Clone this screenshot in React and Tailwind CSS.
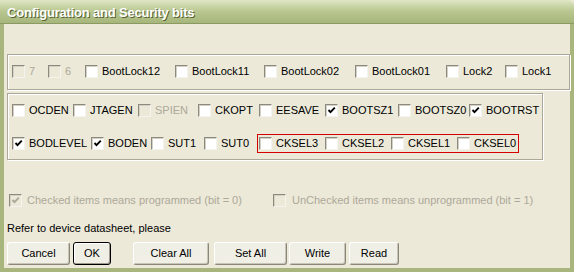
import React from 'react';

const row1 = [
  { label: '7', w: 'w-[36px]', disabled: true },
  { label: '6', w: 'w-[37px]', disabled: true },
  { label: 'BootLock12', w: 'w-[90px]' },
  { label: 'BootLock11', w: 'w-[89px]' },
  { label: 'BootLock02', w: 'w-[91px]' },
  { label: 'BootLock01', w: 'w-[91px]' },
  { label: 'Lock2', w: 'w-[59px]' },
  { label: 'Lock1', w: 'w-[50px]' },
];

const row2 = [
  { label: 'OCDEN', w: 'w-[61px]' },
  { label: 'JTAGEN', w: 'w-[65px]' },
  { label: 'SPIEN', w: 'w-[60px]', disabled: true },
  { label: 'CKOPT', w: 'w-[61px]' },
  { label: 'EESAVE', w: 'w-[66px]' },
  { label: 'BOOTSZ1', w: 'w-[73px]', checked: true },
  { label: 'BOOTSZ0', w: 'w-[71px]' },
  { label: 'BOOTRST', w: 'w-[60px]', checked: true },
];

const row3 = [
  { label: 'BODLEVEL', w: 'w-[79px]', checked: true },
  { label: 'BODEN', w: 'w-[60px]', checked: true },
  { label: 'SUT1', w: 'w-[53px]' },
  { label: 'SUT0', w: 'w-[53px]' },
];

const cksel = [
  { label: 'CKSEL3', w: 'w-[66px]' },
  { label: 'CKSEL2', w: 'w-[66px]' },
  { label: 'CKSEL1', w: 'w-[66px]' },
  { label: 'CKSEL0', w: 'w-[59px]' },
];

const buttons = [
  { label: 'Cancel', cls: 'ml-[3px] w-[63px]' },
  { label: 'OK', cls: 'ml-[3px] w-[38px]', def: true },
  { label: 'Clear All', cls: 'ml-[22px] w-[76px]' },
  { label: 'Set All', cls: 'ml-[5px] w-[73px]' },
  { label: 'Write', cls: 'ml-[2px] w-[57px]' },
  { label: 'Read', cls: 'ml-[3px] w-[50px]' },
];

function Box({ checked, disabled }) {
  return (
    <span
      className={`relative flex items-center justify-center w-[13px] h-[13px] shrink-0 border border-t-[#8c8a7e] border-l-[#8c8a7e] border-b-[#f4f3ee] border-r-[#f4f3ee] shadow-[inset_1px_1px_0_#d4d0c4] ${disabled ? 'bg-[#ece9d8]' : 'bg-white'}`}
    >
      {checked && (
        <svg width="9" height="9" viewBox="0 0 9 9">
          <path
            d="M1.5 4 L3.5 6.2 L7.8 1.6"
            fill="none"
            stroke={disabled ? '#aca899' : '#000'}
            strokeWidth="1.9"
          />
        </svg>
      )}
    </span>
  );
}

function Check({ label, w, checked, disabled }) {
  return (
    <div className={`flex items-center gap-[4px] shrink-0 ${w}`}>
      <Box checked={checked} disabled={disabled} />
      <span className={`whitespace-nowrap leading-[13px] ${disabled ? 'text-[#aca899]' : 'text-black'}`}>{label}</span>
    </div>
  );
}

export default function App() {
  return (
    <div className="w-[574px] h-[272px] flex flex-col overflow-hidden font-['Liberation_Sans',Arial,sans-serif] text-[11px] bg-[#ece9d8]">
      {/* Title bar */}
      <div className="h-[24px] shrink-0 flex items-center pl-[7px] pt-[2px] rounded-tr-[6px] border-b border-[#8b9a62] bg-gradient-to-b from-[#dfe6c4] via-[#b8c68f] to-[#a7b67c]">
        <span className="text-white font-bold text-[13px] tracking-[-0.2px] [text-shadow:1px_1px_0_#56632f]">
          Configuration and Security bits
        </span>
      </div>

      {/* Body */}
      <div className="flex-1 flex flex-col border-l-[4px] border-r-[4px] border-b-[4px] border-[#a8b67e] bg-[#ece9d8]">
        {/* Lock bits group */}
        <div className="ml-[3px] mt-[30px] w-[563px] h-[36px] border border-[#aca899] shadow-[inset_1px_1px_0_#fff,1px_1px_0_#fff] pt-[10px] pl-[4px]">
          <div className="flex items-center h-[13px]">
            {row1.map((c) => (
              <Check key={c.label} {...c} />
            ))}
          </div>
        </div>

        {/* Fuse bits group */}
        <div className="ml-[3px] mt-[3px] w-[536px] h-[67px] border border-[#aca899] shadow-[inset_1px_1px_0_#fff,1px_1px_0_#fff] pt-[10px] pl-[4px]">
          <div className="flex items-center h-[13px]">
            {row2.map((c) => (
              <Check key={c.label} {...c} />
            ))}
          </div>
          <div className="flex items-center mt-[17px]">
            {row3.map((c) => (
              <Check key={c.label} {...c} />
            ))}
            <div className="flex items-center border border-[#d40000] py-[2px] pl-[1px] pr-[2px]">
              {cksel.map((c) => (
                <Check key={c.label} {...c} />
              ))}
            </div>
          </div>
        </div>

        {/* Legend */}
        <div className="flex items-center h-[13px] ml-[5px] mt-[34px]">
          <div className="flex items-center gap-[5px] w-[264px] shrink-0">
            <Box checked disabled />
            <span className="text-[#aca899] whitespace-nowrap">Checked items means programmed (bit = 0)</span>
          </div>
          <div className="flex items-center gap-[6px]">
            <Box disabled />
            <span className="text-[#aca899] whitespace-nowrap">UnChecked items means unprogrammed (bit = 1)</span>
          </div>
        </div>

        <div className="ml-[3px] mt-[15px] leading-[13px] text-black">Refer to device datasheet, please</div>

        {/* Buttons */}
        <div className="flex mt-[7px]">
          {buttons.map((b) => (
            <button
              key={b.label}
              className={`h-[23px] shrink-0 rounded-[3px] text-black text-[11px] bg-[#f0efe6] ${b.cls} ${
                b.def
                  ? 'border border-black shadow-[inset_1px_1px_0_#fff,inset_-1px_-1px_0_#9e9b8c]'
                  : 'border border-t-white border-l-white border-b-[#8a877a] border-r-[#8a877a] shadow-[inset_-1px_-1px_0_#c8c5b6]'
              }`}
            >
              {b.label}
            </button>
          ))}
        </div>
      </div>
    </div>
  );
}
